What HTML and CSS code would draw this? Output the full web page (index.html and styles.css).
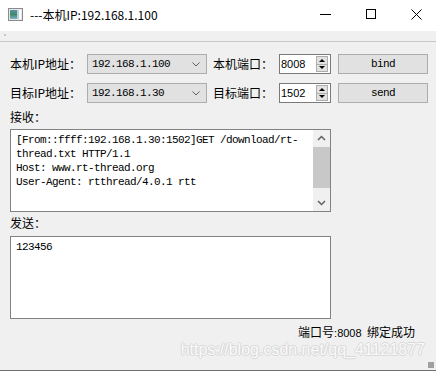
FILE: index.html
```html
<!DOCTYPE html>
<html>
 <head>
  <meta charset="utf-8">
  <title>---本机IP:192.168.1.100</title>
  <link rel="stylesheet" href="styles.css">
 </head>
 <body>
  <div class="window">
   <div class="titlebar">
    <svg class="appicon" width="15" height="13" viewBox="0 0 15 13">
     <defs>
      <linearGradient id="g1" x1="0" y1="0" x2="0" y2="1">
       <stop offset="0" stop-color="#5d8fa3"/>
       <stop offset="0.5" stop-color="#3f8a6a"/>
       <stop offset="1" stop-color="#7fb0c8"/>
      </linearGradient>
     </defs>
     <rect x="0.5" y="0.5" width="14" height="12" fill="#e8e8e8" stroke="#8a8a8a"/>
     <rect x="2" y="2" width="7" height="9" fill="url(#g1)"/>
     <rect x="9" y="2" width="2" height="9" fill="#b9d3de"/>
     <rect x="11" y="2" width="2" height="9" fill="#ffffff"/>
    </svg>
    <span class="title">---本机IP:192.168.1.100</span>
    <div class="controls">
     <svg width="11" height="10" viewBox="0 0 11 10"><line x1="0" y1="5.5" x2="11" y2="5.5" stroke="#000" stroke-width="1"/></svg>
     <svg width="10" height="10" viewBox="0 0 10 10"><rect x="0.5" y="0.5" width="9" height="9" fill="none" stroke="#000" stroke-width="1"/></svg>
     <svg width="11" height="11" viewBox="0 0 11 11"><path d="M0.5 0.5 L10.5 10.5 M10.5 0.5 L0.5 10.5" stroke="#000" stroke-width="1"/></svg>
    </div>
   </div>
   <div class="menubar"><span class="grip"></span></div>

   <div class="content">
    <div class="row">
     <span class="label">本机IP地址：</span>
     <div class="combo"><span>192.168.1.100</span><svg class="chev" width="8" height="5" viewBox="0 0 8 5"><path d="M0.5 0.5 L4 4 L7.5 0.5" fill="none" stroke="#606060"/></svg></div>
     <span class="label label2">本机端口：</span>
     <div class="spin"><span>8008</span><div class="arrows"><i class="up"></i><i class="down"></i></div></div>
     <div class="button">bind</div>
    </div>
    <div class="row row2">
     <span class="label">目标IP地址：</span>
     <div class="combo"><span>192.168.1.30</span><svg class="chev" width="8" height="5" viewBox="0 0 8 5"><path d="M0.5 0.5 L4 4 L7.5 0.5" fill="none" stroke="#606060"/></svg></div>
     <span class="label label2">目标端口：</span>
     <div class="spin"><span>1502</span><div class="arrows"><i class="up"></i><i class="down"></i></div></div>
     <div class="button">send</div>
    </div>

    <div class="caption">接收：</div>
    <div class="edit recv">
     <div class="text">
      <div class="line">[From::ffff:192.168.1.30:1502]GET /download/rt-</div>
      <div class="line">thread.txt HTTP/1.1</div>
      <div class="line">Host: www.rt-thread.org</div>
      <div class="line">User-Agent: rtthread/4.0.1 rtt</div>
     </div>
     <div class="scrollbar">
      <svg class="sarrow" width="17" height="17" viewBox="0 0 17 17"><path d="M5 10 L8.5 6.5 L12 10" fill="none" stroke="#606060" stroke-width="1.5"/></svg>
      <div class="thumb"></div>
      <div class="track"></div>
      <svg class="sarrow" width="17" height="17" viewBox="0 0 17 17"><path d="M5 7 L8.5 10.5 L12 7" fill="none" stroke="#606060" stroke-width="1.5"/></svg>
     </div>
    </div>

    <div class="caption caption2">发送：</div>
    <div class="edit send">
     <div class="text"><div class="line">123456</div></div>
    </div>

    <div class="status">端口号<span class="num">:8008</span>&nbsp; 绑定成功</div>
   </div>
   <div class="watermark">https://blog.csdn.net/qq_41121877</div>
   <div class="sizegrip"></div>
  </div>
 </body>
</html>
```

FILE: styles.css
```css
html, body { margin: 0; padding: 0; }
body
{
 width: 436px;
 height: 371px;
 overflow: hidden;
 background: #f0f0f0;
 font-family: "Noto Sans CJK SC", sans-serif;
 font-size: 12px;
 color: #000;
}
.window
{
 position: relative;
 height: 370px;
 border-bottom: 1px solid #707070;
}
.titlebar
{
 height: 31px;
 background: #fff;
 display: flex;
 align-items: center;
}
.appicon { margin-left: 8px; margin-top: -3px; }
.title
{
 margin-left: 7px;
 margin-top: -3px;
 font-size: 12px;
 color: #000;
}
.controls
{
 margin-left: auto;
 margin-right: 14px;
 margin-top: -3px;
 display: flex;
 align-items: center;
 gap: 35px;
}
.menubar
{
 height: 10px;
 border-bottom: 1px solid #c8c8c8;
 position: relative;
}
.grip
{
 position: absolute;
 left: 4px;
 top: 3px;
 width: 2px;
 height: 2px;
 background: #c8c8c8;
}
.content { padding: 12px 0 0 10px; }
.row
{
 display: flex;
 align-items: center;
 height: 20px;
}
.row2 { margin-top: 9px; }
.label
{
 width: 77px;
 white-space: nowrap;
 line-height: 20px;
}
.label2 { width: 66px; margin-left: 6px; }
.combo
{
 box-sizing: border-box;
 width: 120px;
 height: 20px;
 border: 1px solid #adadad;
 background: #e1e1e1;
 display: flex;
 align-items: center;
 padding-left: 4px;
 font-family: "Liberation Mono", monospace;
 font-size: 11px;
 letter-spacing: -0.6px;
}
.chev { margin-left: auto; margin-right: 6px; }
.spin
{
 box-sizing: border-box;
 width: 52px;
 height: 20px;
 border: 1px solid #7a7a7a;
 background: #fff;
 display: flex;
 align-items: center;
 padding-left: 1px;
 font-family: "Liberation Sans", sans-serif;
 font-size: 11px;
}
.arrows
{
 box-sizing: border-box;
 margin-left: auto;
 margin-right: 2px;
 width: 12px;
 height: 16px;
 border: 1px solid #adadad;
 background: #e1e1e1;
 display: flex;
 flex-direction: column;
}
.arrows i
{
 flex: 1;
 display: flex;
 align-items: center;
 justify-content: center;
}
.arrows i.up { border-bottom: 1px solid #adadad; }
.arrows i::before
{
 content: "";
 width: 0;
 height: 0;
 border-left: 3px solid transparent;
 border-right: 3px solid transparent;
}
.arrows i.up::before { border-bottom: 3px solid #000; }
.arrows i.down::before { border-top: 3px solid #000; }
.button
{
 box-sizing: border-box;
 width: 90px;
 height: 20px;
 margin-left: 7px;
 border: 1px solid #adadad;
 background: #e1e1e1;
 text-align: center;
 line-height: 18px;
 font-family: "Liberation Mono", monospace;
 font-size: 11px;
 letter-spacing: -0.6px;
}
.caption
{
 margin-top: 4px;
 line-height: 20px;
 margin-bottom: 2px;
}
.caption2 { margin-top: 1px; margin-bottom: 3px; }
.edit
{
 box-sizing: border-box;
 width: 321px;
 height: 83px;
 border: 1px solid #828282;
 background: #fff;
 display: flex;
}
.text
{
 flex: 1;
 padding: 3px 0 0 5px;
 font-family: "Liberation Mono", monospace;
 font-size: 11px;
 letter-spacing: -0.6px;
 line-height: 14px;
}
.line { white-space: pre; height: 14px; }
.scrollbar
{
 width: 17px;
 background: #f0f0f0;
 display: flex;
 flex-direction: column;
}
.sarrow { display: block; }
.thumb
{
 height: 41px;
 background: #c8c8c8;
}
.track { flex: 1; }
.status
{
 margin-top: 3px;
 padding-right: 21px;
 text-align: right;
 line-height: 20px;
}
.num
{
 font-family: "Liberation Sans", sans-serif;
 font-size: 11px;
}
.watermark
{
 position: absolute;
 right: 11px;
 top: 341px;
 font-family: "Liberation Sans", sans-serif;
 font-size: 16px;
 color: #fafafa;
 text-shadow: 1px 0 0 #d8d8d8, -1px 0 0 #d8d8d8, 0 1px 0 #d8d8d8, 0 -1px 0 #d8d8d8;
}
.sizegrip
{
 position: absolute;
 right: 2px;
 bottom: 2px;
 width: 6px;
 height: 6px;
 background:
  radial-gradient(circle, #a0a0a0 0.8px, transparent 1px) 0 0 / 2px 2px;
}
```
